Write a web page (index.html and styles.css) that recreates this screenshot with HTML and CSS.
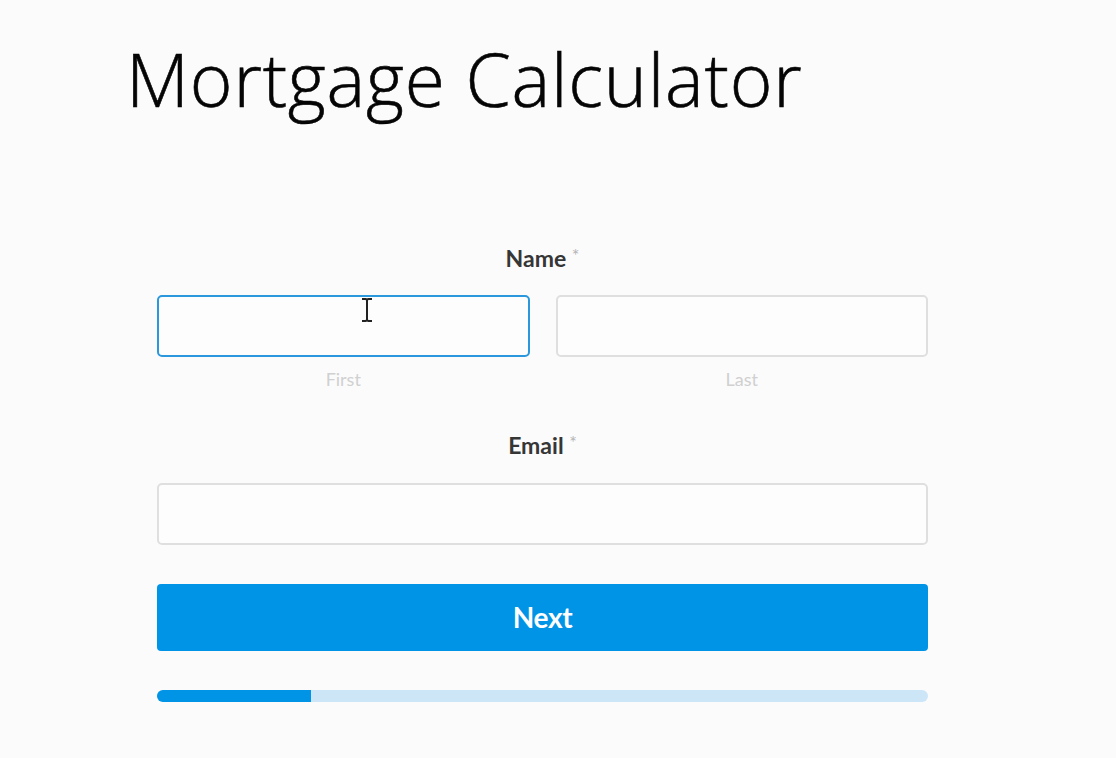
FILE: index.html
```html
<!DOCTYPE html>
<html lang="en">
<head>
<meta charset="utf-8">
<title>Mortgage Calculator</title>
<link rel="stylesheet" href="styles.css">
</head>
<body>
<div class="page">
  <h1 class="title">Mortgage Calculator</h1>
  <form class="form">
    <div class="field">
      <div class="label">Name <span class="req">*</span></div>
      <div class="name-row">
        <div class="sub">
          <div class="input focused">
            <svg class="cursor" width="14" height="26" viewBox="0 0 14 26"><path d="M2 2h3.5Q7 2 7 4v18q0 2-1.5 2H2M12 2H8.5Q7 2 7 4v18q0 2 1.5 2H12" fill="none" stroke="#222" stroke-width="2"/></svg>
          </div>
          <div class="sublabel">First</div>
        </div>
        <div class="sub">
          <div class="input"></div>
          <div class="sublabel">Last</div>
        </div>
      </div>
    </div>
    <div class="field email">
      <div class="label">Email <span class="req">*</span></div>
      <div class="input"></div>
    </div>
    <div class="button">Next</div>
    <div class="progress"><div class="fill" style="width:20%"></div></div>
  </form>
</div>
</body>
</html>
```
FILE: styles.css
```css
html, body {
  margin: 0;
  padding: 0;
  background: #fbfbfc;
}
.page {
  width: 1116px;
  height: 758px;
  overflow: hidden;
}
.title {
  margin: 0;
  padding: 29px 0 0 126px;
  font-family: "Open Sans", sans-serif;
  font-weight: 300;
  font-size: 73px;
  line-height: 100px;
  color: #050505;
  letter-spacing: 0.8px;
  -webkit-text-stroke: 0.6px #050505;
}
.form {
  margin: 117px 0 0 157px;
  width: 771px;
  font-family: "Lato", sans-serif;
}
.label {
  text-align: center;
  font-weight: 700;
  font-size: 23px;
  line-height: 24px;
  color: #363636;
}
.req {
  color: #b5b5b5;
  font-weight: 400;
  font-size: 18px;
  vertical-align: top;
  position: relative;
  top: -3px;
}
.name-row {
  display: flex;
  gap: 26px;
  margin-top: 25px;
}
.sub {
  flex: 1;
}
.input {
  position: relative;
  height: 58px;
  border: 2px solid #dfdfdf;
  border-radius: 5px;
  background: #fdfdfd;
}
.input.focused {
  border-color: #2b97dc;
}
.cursor {
  position: absolute;
  left: 201px;
  top: 0px;
}
.sublabel {
  text-align: center;
  margin-top: 12px;
  font-size: 18px;
  line-height: 20px;
  color: #d0d0d0;
}
.email {
  margin-top: 44px;
}
.email .input {
  margin-top: 26px;
}
.button {
  margin-top: 39px;
  height: 67px;
  border-radius: 4px;
  background: #0094e7;
  color: #fff;
  font-weight: 700;
  font-size: 28px;
  line-height: 67px;
  text-align: center;
  letter-spacing: -0.3px;
}
.progress {
  margin-top: 39px;
  height: 12px;
  border-radius: 6px;
  background: #cce6f8;
  overflow: hidden;
}
.fill {
  height: 100%;
  background: #0094e7;
}
```
